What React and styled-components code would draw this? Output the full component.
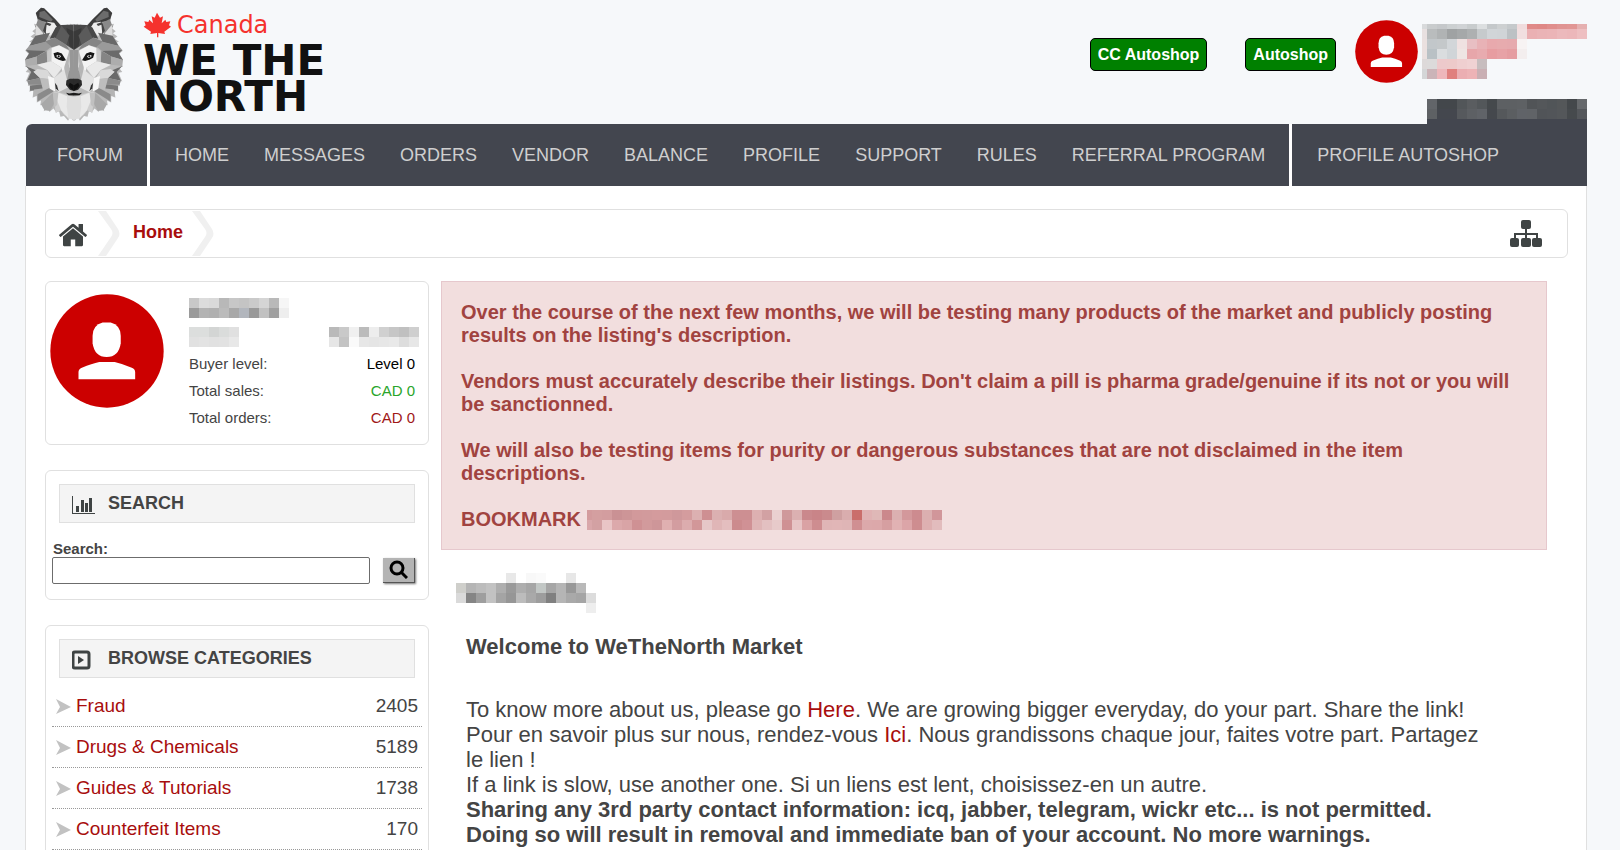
import React from 'react';
import styled, { createGlobalStyle, ThemeProvider } from 'styled-components';

const theme = {
  color: {
    page: '#f6f8fa',
    surface: '#fff',
    nav: '#43464f',
    text: '#444',
    link: '#a80d0d',
    line: '#e0e0e0',
    brand: '#cc0000',
    shop: '#008000',
    alertBg: '#f2dede',
    alertLine: '#e6c8cd',
    alertText: '#a14340'
  }
};

const themeColor = (name) => ({ theme }) => theme.color[name];

const GlobalStyle = createGlobalStyle`
  *, *::before, *::after {
    box-sizing: border-box;
  }

  body {
    margin: 0;
    background: ${themeColor('page')};
    color: ${themeColor('text')};
    font-family: "Liberation Sans", Arial, sans-serif;
    font-size: 18px;
  }
`;

const Page = styled.div`
  min-height: 100vh;
  padding: 0 33px 0 25px;
  display: flex;
  flex-direction: column;
`;

/* Header */

const Header = styled.header`
  display: flex;
  height: 124px;
  justify-content: space-between;
`;

const Brand = styled.a`
  display: flex;
  gap: 20px;
  padding-top: 7px;
  color: #111;
  text-decoration: none;
`;

const BrandName = styled.span`
  display: flex;
  flex-direction: column;
  font-family: "DejaVu Sans", sans-serif;
  font-size: 42px;
  font-weight: bold;
  line-height: 36px;
`;

const BrandCountry = styled.span`
  display: flex;
  align-items: center;
  gap: 6px;
  height: 36px;
  color: #f5322d;
  font-size: 24px;
  font-weight: normal;
`;

const Account = styled.div`
  display: flex;
  align-items: flex-start;
`;

const ShopLink = styled.a`
  margin: 38px 38px 0 0;
  padding: 0 7px;
  border: 1px solid #000;
  border-radius: 5px;
  background: ${themeColor('shop')};
  color: #fff;
  font-size: 16px;
  font-weight: bold;
  line-height: 31px;
  text-decoration: none;

  & + & {
    margin-right: 19px;
  }
`;

const Avatar = styled.svg`
  flex: none;
  width: ${({ $size }) => $size}px;
  height: ${({ $size }) => $size}px;
`;

const HeaderAvatar = styled(Avatar)`
  margin: 20px 4px 0 0;
`;

const AccountInfo = styled.div`
  display: flex;
  flex-direction: column;
  align-items: flex-end;
  gap: 20px;
  padding-top: 24px;
`;

const AccountTab = styled.div`
  padding-bottom: 5px;
  background: ${themeColor('nav')};
`;

const Mosaic = styled.span`
  display: inline-grid;
  grid-template-columns: ${({ $firstColumn = 10 }) => $firstColumn}px;
  grid-auto-columns: 10px;
  grid-template-rows: ${({ $firstRow = 10 }) => $firstRow}px;
  grid-auto-rows: 10px;
  vertical-align: top;
`;

/* Navigation */

const Nav = styled.nav`
  display: flex;
  gap: 3px;
  margin-left: 1px;
  border-radius: 6px 0 0 0;
  background: ${themeColor('surface')};
  overflow: hidden;
`;

const NavGroup = styled.ul`
  display: flex;
  gap: 35px;
  flex: ${({ $grow }) => ($grow ? '1' : 'none')};
  margin: 0;
  padding: ${({ $lead }) => ($lead ? '0 24px 0 31px' : '0 24px 0 25px')};
  background: ${themeColor('nav')};
  list-style: none;
`;

const NavLink = styled.a`
  color: #cfcfcf;
  font-size: 18px;
  line-height: 62px;
  text-decoration: none;
  white-space: nowrap;
`;

/* Body */

const Surface = styled.div`
  flex: 1;
  padding: 23px 18px 24px 19px;
  border: solid ${themeColor('line')};
  border-width: 0 1px;
  background: ${themeColor('surface')};
`;

const Breadcrumb = styled.nav`
  display: flex;
  align-items: center;
  height: 49px;
  padding: 0 25px 0 13px;
  border: 1px solid ${themeColor('line')};
  border-radius: 6px;
`;

const CrumbIcon = styled.a`
  display: flex;
  color: #3f4444;
`;

const CrumbLink = styled.a`
  margin: 0 9px 2px 13px;
  color: ${themeColor('link')};
  font-weight: bold;
  text-decoration: none;
`;

const Chevron = styled.svg`
  width: 22px;
  height: 45px;
  margin-left: ${({ $gap }) => $gap || 0}px;
`;

const SitemapLink = styled(CrumbIcon)`
  margin-left: auto;
`;

const Columns = styled.div`
  display: flex;
  gap: 12px;
  margin-top: 23px;
`;

const Sidebar = styled.aside`
  display: flex;
  flex: none;
  flex-direction: column;
  gap: 25px;
  width: 384px;
`;

const Card = styled.section`
  padding: 13px 6px 15px;
  border: 1px solid ${themeColor('line')};
  border-radius: 6px;
`;

const ProfileCard = styled(Card)`
  display: flex;
  gap: 25px;
  padding: 12px 9px 13px 4px;
`;

const ProfileInfo = styled.div`
  flex: 1;
  padding-top: 4px;
`;

const Redacted = styled.div`
  display: flex;
  justify-content: space-between;
  margin-bottom: 9px;
`;

const Stats = styled.dl`
  margin: -6px 4px 0 0;
  font-size: 15px;
  line-height: 27px;
`;

const Stat = styled.div`
  display: flex;
  justify-content: space-between;
`;

const StatValue = styled.dd`
  margin: 0;
  color: ${({ $color }) => $color};
`;

const CardTitle = styled.h2`
  display: flex;
  align-items: center;
  gap: 12px;
  height: 39px;
  margin: 0 7px;
  padding: 0 12px;
  border: 1px solid ${themeColor('line')};
  background: #f4f4f4;
  font-size: 18px;
  line-height: 37px;

  svg {
    width: 24px;
    height: 24px;
    margin-top: 2px;
  }
`;

const SearchForm = styled.form`
  display: flex;
  flex-wrap: wrap;
  align-items: center;
  gap: 0 13px;
  margin-top: 17px;

  label {
    flex: 0 0 100%;
    padding-left: 1px;
    font-size: 15px;
    font-weight: bold;
    line-height: 17px;
  }

  input {
    flex: 1;
    min-width: 0;
    height: 27px;
    border: 1px solid #6c6c6c;
    border-radius: 2px;
    font: inherit;
  }
`;

const SearchButton = styled.button`
  display: flex;
  justify-content: center;
  width: 32px;
  height: 25px;
  margin-right: 7px;
  padding: 2px 0;
  border: 0;
  border-right: 1px solid #555;
  border-bottom: 1px solid #555;
  background: #b4b4b4;
  box-shadow: 1px 1px 2px #777;
  cursor: pointer;
`;

const Categories = styled.ul`
  margin: 8px 0 0;
  padding: 0;
  list-style: none;
`;

const Category = styled.li`
  display: flex;
  align-items: center;
  padding: 0 4px;
  border-bottom: 1px dotted #999;
  font-size: 19px;
  line-height: 40px;

  a {
    margin: 0 auto 0 5px;
    color: ${themeColor('link')};
    text-decoration: none;
  }
`;

const Content = styled.main`
  flex: 1;
  min-width: 0;
  margin-right: 21px;
`;

const Alert = styled.section`
  padding: 19px 19px 18px;
  border: 1px solid ${themeColor('alertLine')};
  background: ${themeColor('alertBg')};
  color: ${themeColor('alertText')};
  font-size: 20px;
  font-weight: bold;
  line-height: 23px;

  p {
    margin: 0 0 23px;
  }

  p:last-child {
    margin: 0;
  }
`;

const BookmarkRow = styled.p`
  display: flex;
  align-items: center;
  gap: 6px;
`;

const UserName = styled.div`
  padding: 23px 0 0 15px;
`;

const Welcome = styled.article`
  padding: 21px 50px 0 25px;
  font-size: 22px;
  line-height: 25px;

  h1 {
    margin: 0 0 38px;
    font-size: 22px;
    line-height: 25px;
  }

  p {
    margin: 0;
  }

  a {
    color: ${themeColor('link')};
    text-decoration: none;
  }
`;

/* Rows of cell colours, "-" leaves the cell empty. */
const mosaics = {
  account: [
    'd8dadb c9cccd c5c8ca ccd0d1 d0d3d5 c8cccd dcdfe0 c4c8ca cdd0d1 c5c9cb f0dcdd e08a88 df8886 e08e8c e09492 e19694 e5b0b0',
    'e8e0e0 b9bcbd b0b3b4 9fa2a3 a5a8a9 adb0b1 c6cacc d1d5d8 d0d4d7 bcc1c4 f1dfe0 eab0b3 eab3b6 ebb4b7 ecb9bc ecb7ba eebfc1',
    'eae0df c2c7ca c4c8ca d2d6d9 efe1e1 e8bfc3 e8b2b6 e8a9ad e7abae e6aaae f7f3f3 - - - - - -',
    'eae0df b9c1c5 dadddf d0d5d8 eee5e3 e7a6aa e8abaf e79da1 e7a2a6 e59da1 f3eeee - - - - - -',
    'ddd9d9 dcdada edc9cb edcaca efcfd0 f0d2d3 c7bdbe - - - - - - - - - -',
    'd4d6d7 cbb4b8 eeb7bb e0807e ebaeb2 edb3b6 c9afb3 - - - - - - - - - -'
  ],
  balance: [
    '626569 43474b 43474b 525659 5a5d60 53575a 45494c 5d6063 5d6063 5e6164 515457 54575a 515558 545759 44484b 66696c',
    '5e6164 44474e 44474e 56595d 5d6064 606368 45484d 55585b 5b5e61 606368 606367 515458 525559 54575a 464a4d 54575b'
  ],
  name: [
    'c8c8c8 dcdcdc d9d9d9 b8b8b8 c7c7c7 c4c4c4 cacaca d5d5d5 b9b9b9 f6f6f6',
    '9a9a9a b3b3b3 b0b0b0 bbbbbb a8a8a8 b2b6bd 999999 c1c1c1 a0a0a0 eeeeee'
  ],
  group: ['dcdedd dcdedd d3d5d4 dadcdb e0e0e0', 'e1e1e1 e3e3e3 e1e1e1 e2e2e2 e8e8e8'],
  joined: [
    'b9b9b9 c9c9c9 f0f0f0 bbbbbb ededed d0d0d0 c6c6c6 c0c0c0 cfcfcf',
    'e6e6e6 c3c3c3 fafafa e7e7e7 e5e5e5 e7e7e7 e9e9e9 dddddd e7e7e7'
  ],
  bookmark: [
    'd39b9d d49fa0 d39d9f ca9194 cd9597 d2999b d29a9c d49b9d d39b9d cf989b d49c9e dcb0b1 ce8f92 dbb0b1 d9aaab cd8f92 cd8f92 ddb0b1 d2a1a3 ead0d0 cf999b dbb0b1 ca888c c98488 ca8a8d cfa0a1 d9adae ca6e6b e0b2b3 dfb8b7 cb888c dbb0b1 d3989b cd8b8f dbafb0 d1969a',
    'd9a7aa d3a1a3 e9c5c6 dca9ab d9a4a6 cf9194 d29a9c ce9699 e0b0b1 d39da0 dcacae d29799 e6c7c8 e0b6b7 e4bebf cc8b8e d09195 dfb5b6 e3c0c1 e7caca cf9194 e7c4c5 daa2a4 ce8d90 e0b5b6 e1b6b7 dfb5b6 d08f92 dca9ab dca8aa d69fa1 e1b2b3 dca5a8 ce8d90 deb0b1 e2bcbd'
  ],
  user: [
    '- - - - - e8e8e8 - f8f8f8 fafafa - - e7e7e7 - -',
    'cfcfcb b5b5b5 bcbcbc c2c2c2 aeaeae 9a9a9a aeaeae a6a6a6 c2c7c5 a6a6a6 b5b5b5 989898 b9b9b9 -',
    'dadada 858585 9e9e9e c2c2c2 a4a4a4 969696 bcbcbc a9a9a9 9d9d9d 808080 b5b5b5 a9a9a9 a5a5a5 dcdcdc',
    '- - - - - - - - - - - - - eeeeee'
  ]
};

const MosaicBlock = ({ rows, firstColumn, firstRow }) => (
  <Mosaic $firstColumn={firstColumn} $firstRow={firstRow} aria-hidden='true'>
    {rows.map((row, y) => row.split(' ').map((cell, x) => (
      <span
        key={`${x}-${y}`}
        style={{ gridColumn: x + 1, gridRow: y + 1, background: cell === '-' ? 'none' : `#${cell}` }}
      />
    )))}
  </Mosaic>
);

const PersonShape = () => (
  <>
    <circle cx='170' cy='170' r='169' fill={theme.color.brand} />
    <path fill='#fff' d='M157 85h24q30 8 30 40v22q-6 41-42 41t-42-41v-22q0-32 30-40z' />
    <path fill='#fff' d='M85 254v-21q0-9 10-13 30-12 52-17h46q22 5 51 17 10 4 10 13v21z' />
  </>
);

const WolfHalf = () => (
  <>
    <path fill='#b9b9b9' d='M162 72l-6 8-4-9-5 10-6-8-3 8-13-4-20-20-29-30-9-3-15 15 5 24 3 13-14-4 5 14-10 8 8 6-13 10 9 6-13 10 11 4-13 10 5 8-15 4 11 10-13 20 15 0-13 18 13 2-11 14 11 2-11 26 14-5-8 18 12 0-8 18 12-4-2 22 12-8 0 22 12-6-2 14 14-4-4 22 14-10 2 12 12-10 8 12 8-4 4 16 10-2 12 14 6-12 10 14z' />
    {/* ear */}
    <path fill='#3d3d3d' d='M66 24l9 2 33 33 16 20-14 14-28-26-24-4-7-23z' />
    <path fill='#6c6c6c' d='M62 37l14-4 24 27-5 6-34-14z' />
    <path fill='#898989' d='M58 58l-8 22 16 28 20 0-8-40z' />
    <path fill='#ededed' d='M84 66l20 3 8 13-18 25-20 0 6-22z' />
    <path fill='#444' d='M80 67l16 6-4 6-10-4-2 22 4 12-12-16z' />
    <path fill='#dedede' d='M52 75l18 22 8 18-28-6z' />
    {/* forehead */}
    <path fill='#484848' d='M125 76l36-2v76l-22-15-34-21-14 3 17-34z' />
    <path fill='#393939' d='M139 85l23 10v54l-14-11z' />
    <path fill='#5b5b5b' d='M125 77l23 30-9 28-31-21z' />
    <path fill='#858585' d='M106 113l32 21 10 16-30-14-24 7-16-18z' />
    {/* side fur */}
    <path fill='#696969' d='M50 108l42-9-14 28-46 11z' />
    <path fill='#9a9a9a' d='M78 126l-46 12-10 12 58 4 16-14z' />
    <path fill='#6a6a6a' d='M22 150l58 3-26 17-34 10 12-20z' />
    <path fill='#858585' d='M54 170l28-17 2 34-30 7z' />
    <path fill='#adadad' d='M20 180l34-10 0 24-32 4z' />
    <path fill='#6a6a6a' d='M22 198l32 14-9 4 18 18-37 8 12-26z' />
    <path fill='#d9d9d9' d='M56 207l28 4 16 27-37-4-19-19z' />
    <path fill='#8b8b8b' d='M26 242l37-8 15 20-48 0z' />
    <path fill='#767676' d='M34 256l38-3 6 15-44 4z' />
    <path fill='#b4b4b4' d='M46 268l46-6-18 22-30 6z' />
    <path fill='#8a8a8a' d='M56 282l36-20 10 12-46 30z' />
    {/* face */}
    <path fill='#f3f3f3' d='M96 144l22-8 28 16 3 50-16 30-8-28-30-20z' />
    <path fill='#c8c8c8' d='M84 155l12-11 0 40 30 20-20 34-22-31z' />
    <path fill='#e9e9e9' d='M54 194l42-10 30 20-22 30-20-24z' />
    <path fill='#979797' d='M148 150h13v90h-20l8-40z' />
    <path fill='#b5b5b5' d='M148 150l-2 42 3 18-16 25 0-34z' />
    <path fill='#e2e2e2' d='M104 234l29-26 8 32 3 22-28 14-12-14z' />
    <path fill='#bdbdbd' d='M63 234l37 4 8 36-16-12-20 8z' />
    <path fill='#f6f6f6' d='M86 228l18 6 3 40-16-8z' />
    <path fill='#d0d0d0' d='M102 274l14 2 26 8 19 8v66l-28-14-10-14-15 8z' />
    <path fill='#a8a8a8' d='M76 330l-10-18 34-34 4 32-12 22z' />
    <path fill='#e9e9e9' d='M116 278l26 10 4 68-22-26-12-30z' />
    <path fill='#c0c0c0' d='M100 278l16 0-4 36-8 8z' />
    <path fill='#dedede' d='M142 286l19 4v68l-16-4-5-36z' />
    <path fill='#333' d='M106 248l6 8 5 17-9-9z' />
    {/* eye, nose and mouth */}
    <path fill='#171717' d='M102 160l12-4 12 5 12 20-9 2-12-4-11-6z' />
    <path fill='#ddd' d='M111 165h9l4 5-5 4-8-3z' />
    <circle cx='117' cy='169' r='3' fill='#111' />
    <path fill='#2b2b2b' d='M162 236h-13l-10 5-1 14 11 14 13 4z' />
    <path fill='#101010' d='M162 256l-13-8-4 9 8 10 9 5z' />
    <path fill='#1c1c1c' d='M162 278l-15 2-9-2 7 7 17 1z' />
  </>
);

const Logo = () => (
  <svg width='98' height='114' viewBox='20 22 282 340' preserveAspectRatio='none' aria-hidden='true'>
    <WolfHalf />
    <g transform='translate(322 0) scale(-1 1)'><WolfHalf /></g>
  </svg>
);

const MapleLeaf = () => (
  <svg width='28' height='26' viewBox='0 0 84 76' fill='#f5322d' aria-hidden='true'>
    <path d='M42 1l9 15 9-4-4 21 11-11 3 7 12-2-4 12 6 4-20 15 2 7-20-3 0 13h-4l0-13-20 3 2-7L2 43l6-4-4-12 12 2 3-7 11 11-4-21 9 4z' />
  </svg>
);

const HomeIcon = () => (
  <svg width='28' height='32' viewBox='90 -60 1612 1792' fill='currentColor'>
    <path d='M1472 992v480q0 26-19 45t-45 19h-384v-384H768v384H384q-26 0-45-19t-19-45V992q0-1 .5-3t.5-3l575-474 575 474q1 2 1 6zm223-69l-62 74q-8 9-21 11h-3q-13 0-21-7L896 424 204 1001q-12 8-24 7-13-2-21-11l-62-74q-8-10-7-23.5t11-21.5l719-599q32-26 76-26t76 26l244 204V288q0-14 9-23t23-9h192q14 0 23 9t9 23v408l219 182q10 8 11 21.5t-7 23.5z' />
  </svg>
);

const SitemapIcon = () => (
  <svg width='32' height='28' viewBox='0 0 32 28' fill='currentColor'>
    <rect x='11' y='0' width='10' height='9' rx='2' />
    <rect x='0' y='18' width='9' height='9' rx='2' />
    <rect x='11' y='18' width='10' height='9' rx='2' />
    <rect x='22' y='18' width='10' height='9' rx='2' />
    <path d='M5 19v-5h22v5M16 8v11' fill='none' stroke='currentColor' strokeWidth='2' />
  </svg>
);

const ChartIcon = () => (
  <svg viewBox='0 0 24 24' fill='#3f4444' aria-hidden='true'>
    <path d='M0 3h1v17h22v1H0zM4 13h3v6H4zM9 7h3v12H9zM13 10h3v9h-3zM17 5h3v14h-3z' />
  </svg>
);

const PlayIcon = () => (
  <svg viewBox='0 0 24 24' aria-hidden='true'>
    <rect x='1' y='4' width='16' height='16' rx='2' fill='none' stroke='#3f4444' strokeWidth='3' />
    <path d='M6 8l6 4-6 4z' fill='#3f4444' />
  </svg>
);

const SearchIcon = () => (
  <svg width='19' height='19' viewBox='0 0 19 19' fill='none' stroke='#000' strokeWidth='3' aria-hidden='true'>
    <circle cx='8' cy='8' r='6' />
    <path d='M12 12l6 6' />
  </svg>
);

const Arrow = () => (
  <svg width='15' height='15' viewBox='0 0 15 15' fill='#c2c2c2' aria-hidden='true'>
    <path d='M0 0l15 8-15 7 4-7z' />
  </svg>
);

const CrumbChevron = ({ gap }) => (
  <Chevron $gap={gap} viewBox='0 0 22 45' aria-hidden='true'>
    <path fill='#f0f0f0' d='M0 0h8l12 18q3 5 0 9L8 45H0l13-19q3-4 0-8z' />
  </Chevron>
);

const navGroups = [
  ['Forum'],
  ['Home', 'Messages', 'Orders', 'Vendor', 'Balance', 'Profile', 'Support', 'Rules', 'Referral program'],
  ['Profile autoshop']
];

const stats = [
  { label: 'Buyer level:', value: 'Level 0', color: '#000' },
  { label: 'Total sales:', value: 'CAD 0', color: '#2aa52a' },
  { label: 'Total orders:', value: 'CAD 0', color: '#a01818' }
];

const categories = [
  ['Fraud', 2405],
  ['Drugs & Chemicals', 5189],
  ['Guides & Tutorials', 1738],
  ['Counterfeit Items', 170]
];

const PageHeader = () => (
  <Header>
    <Brand href='#'>
      <Logo />
      <BrandName>
        <BrandCountry><MapleLeaf />Canada</BrandCountry>
        <span>WE THE<br />NORTH</span>
      </BrandName>
    </Brand>
    <Account>
      <ShopLink href='#'>CC Autoshop</ShopLink>
      <ShopLink href='#'>Autoshop</ShopLink>
      <HeaderAvatar $size={63} viewBox='0 0 340 340'><PersonShape /></HeaderAvatar>
      <AccountInfo>
        <MosaicBlock rows={mosaics.account} firstColumn={5} firstRow={5} />
        <AccountTab><MosaicBlock rows={mosaics.balance} /></AccountTab>
      </AccountInfo>
    </Account>
  </Header>
);

const MainNav = () => (
  <Nav>
    {navGroups.map((group, i) => (
      <NavGroup key={group[0]} $lead={i === 0} $grow={i === navGroups.length - 1}>
        {group.map(item => (
          <li key={item}><NavLink href='#'>{item.toUpperCase()}</NavLink></li>
        ))}
      </NavGroup>
    ))}
  </Nav>
);

const Profile = () => (
  <ProfileCard>
    <Avatar $size={114} viewBox='0 0 340 340'><PersonShape /></Avatar>
    <ProfileInfo>
      <Redacted><MosaicBlock rows={mosaics.name} /></Redacted>
      <Redacted>
        <MosaicBlock rows={mosaics.group} />
        <MosaicBlock rows={mosaics.joined} />
      </Redacted>
      <Stats>
        {stats.map(({ label, value, color }) => (
          <Stat key={label}>
            <dt>{label}</dt>
            <StatValue $color={color}>{value}</StatValue>
          </Stat>
        ))}
      </Stats>
    </ProfileInfo>
  </ProfileCard>
);

const Search = () => (
  <Card>
    <CardTitle><ChartIcon />SEARCH</CardTitle>
    <SearchForm onSubmit={e => e.preventDefault()}>
      <label htmlFor='search'>Search:</label>
      <input id='search' type='text' />
      <SearchButton type='submit' aria-label='Search'><SearchIcon /></SearchButton>
    </SearchForm>
  </Card>
);

const Browse = () => (
  <Card>
    <CardTitle><PlayIcon />BROWSE CATEGORIES</CardTitle>
    <Categories>
      {categories.map(([name, count]) => (
        <Category key={name}>
          <Arrow />
          <a href='#'>{name}</a>
          <span>{count}</span>
        </Category>
      ))}
    </Categories>
  </Card>
);

const App = () => (
  <ThemeProvider theme={theme}>
    <GlobalStyle />
    <Page>
      <PageHeader />
      <MainNav />
      <Surface>
        <Breadcrumb>
          <CrumbIcon href='#' aria-label='Start page'><HomeIcon /></CrumbIcon>
          <CrumbChevron gap={11} />
          <CrumbLink href='#'>Home</CrumbLink>
          <CrumbChevron />
          <SitemapLink href='#' aria-label='Site map'><SitemapIcon /></SitemapLink>
        </Breadcrumb>
        <Columns>
          <Sidebar>
            <Profile />
            <Search />
            <Browse />
          </Sidebar>
          <Content>
            <Alert>
              <p>Over the course of the next few months, we will be testing many products of the market and publicly posting results on the listing's description.</p>
              <p>Vendors must accurately describe their listings. Don't claim a pill is pharma grade/genuine if its not or you will be sanctionned.</p>
              <p>We will also be testing items for purity or dangerous substances that are not disclaimed in the item descriptions.</p>
              <BookmarkRow>BOOKMARK <MosaicBlock rows={mosaics.bookmark} firstColumn={5} /></BookmarkRow>
            </Alert>
            <UserName><MosaicBlock rows={mosaics.user} /></UserName>
            <Welcome>
              <h1>Welcome to WeTheNorth Market</h1>
              <p>To know more about us, please go <a href='#'>Here</a>. We are growing bigger everyday, do your part. Share the link!</p>
              <p>Pour en savoir plus sur nous, rendez-vous <a href='#'>Ici</a>. Nous grandissons chaque jour, faites votre part. Partagez le lien !</p>
              <p>If a link is slow, use another one. Si un liens est lent, choisissez-en un autre.</p>
              <p><strong>Sharing any 3rd party contact information: icq, jabber, telegram, wickr etc... is not permitted.</strong></p>
              <p><strong>Doing so will result in removal and immediate ban of your account. No more warnings.</strong></p>
            </Welcome>
          </Content>
        </Columns>
      </Surface>
    </Page>
  </ThemeProvider>
);

export default App;
